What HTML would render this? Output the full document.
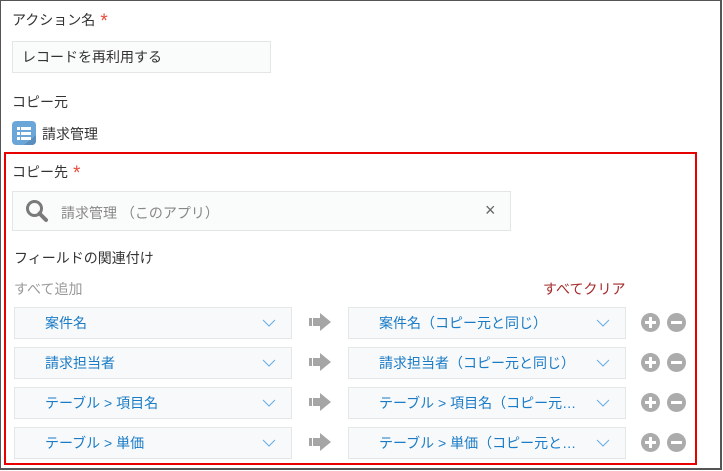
<!DOCTYPE html>
<html><head><meta charset="utf-8"><style>
*{box-sizing:border-box;margin:0;padding:0}
body{width:723px;height:471px;overflow:hidden;background:#fff;font-family:"Liberation Sans","Noto Sans CJK JP",sans-serif;font-size:14px;color:#333;position:relative}
.frame{position:absolute;left:0;top:0;width:722px;height:470px;border:1px solid #555;border-right-width:2px;border-bottom-width:2px}
.a{position:absolute;white-space:nowrap}
.req{color:#e74c3c;margin-left:5px;font-size:19px;line-height:14px;position:relative;top:2px}
.box{position:absolute;background:#fafbfb;border:1px solid #e3e5e6}
.sel{position:absolute;height:32px;background:#f7f9fa;border:1px solid #e3e7e8;color:#1a7bc6;font-size:14px;line-height:30px;white-space:nowrap}
.sel span{position:absolute;left:30px}
.sel svg{position:absolute;top:11px}
.circ{position:absolute;width:19px;height:19px;border-radius:50%;background:#ababab}
.circ:before{content:"";position:absolute;left:4px;top:8px;width:11px;height:3px;background:#fff}
.plus:after{content:"";position:absolute;left:8px;top:4px;width:3px;height:11px;background:#fff}
</style></head><body>
<div class="frame"></div>
<div class="a" style="left:12px;top:10px">アクション名<span class="req">*</span></div>
<div class="box" style="left:12px;top:41px;width:259px;height:32px"></div>
<div class="a" style="left:22px;top:47px">レコードを再利用する</div>
<div class="a" style="left:12px;top:92px">コピー元</div>
<svg class="a" style="left:12px;top:121px" width="24" height="24" viewBox="0 0 24 24"><rect width="24" height="24" rx="4" fill="#6aa7d8"/><path d="M12 24H20a4 4 0 0 0 4-4V14z" fill="#5a8fbd"/><g fill="#fff"><rect x="5" y="6" width="3" height="3"/><rect x="9" y="6" width="10" height="3"/><rect x="5" y="11" width="3" height="3"/><rect x="9" y="11" width="10" height="3"/><rect x="5" y="16" width="3" height="3"/><rect x="9" y="16" width="10" height="3"/></g></svg>
<div class="a" style="left:42px;top:124px">請求管理</div>
<div class="a" style="left:4px;top:152px;width:693px;height:313px;border:2px solid #e60000"></div>
<div class="a" style="left:12px;top:162px">コピー先<span class="req">*</span></div>
<div class="box" style="left:12px;top:191px;width:499px;height:40px"></div>
<svg class="a" style="left:25px;top:199px" width="24" height="24" viewBox="0 0 24 24"><circle cx="9.5" cy="9.5" r="7" fill="none" stroke="#7a7a7a" stroke-width="3"/><path d="M14.5 14.5L21 21" stroke="#7a7a7a" stroke-width="4" stroke-linecap="round"/></svg>
<div class="a" style="left:61px;top:203px;color:#888">請求管理 （このアプリ）</div>
<div class="a" style="left:485px;top:200px;color:#666;font-size:18px">×</div>
<div class="a" style="left:14px;top:248px">フィールドの関連付け</div>
<div class="a" style="left:14px;top:279px;color:#999">すべて追加</div>
<div class="a" style="left:543px;top:279px;color:#a52a2a">すべてクリア</div>

<div class="sel" style="left:14px;top:307px;width:278px"><span>案件名</span><svg style="left:247px" width="14" height="9"><path d="M1 1l6 6 6-6" fill="none" stroke="#6aaee6" stroke-width="1.1"/></svg></div>
<div class="sel" style="left:348px;top:307px;width:278px"><span>案件名（コピー元と同じ）</span><svg style="left:247px" width="14" height="9"><path d="M1 1l6 6 6-6" fill="none" stroke="#6aaee6" stroke-width="1.1"/></svg></div>
<div class="sel" style="left:14px;top:347px;width:278px"><span>請求担当者</span><svg style="left:247px" width="14" height="9"><path d="M1 1l6 6 6-6" fill="none" stroke="#6aaee6" stroke-width="1.1"/></svg></div>
<div class="sel" style="left:348px;top:347px;width:278px"><span>請求担当者（コピー元と同じ）</span><svg style="left:247px" width="14" height="9"><path d="M1 1l6 6 6-6" fill="none" stroke="#6aaee6" stroke-width="1.1"/></svg></div>
<div class="sel" style="left:14px;top:387px;width:278px"><span>テーブル &gt; 項目名</span><svg style="left:247px" width="14" height="9"><path d="M1 1l6 6 6-6" fill="none" stroke="#6aaee6" stroke-width="1.1"/></svg></div>
<div class="sel" style="left:348px;top:387px;width:278px"><span>テーブル &gt; 項目名（コピー元…</span><svg style="left:247px" width="14" height="9"><path d="M1 1l6 6 6-6" fill="none" stroke="#6aaee6" stroke-width="1.1"/></svg></div>
<div class="sel" style="left:14px;top:427px;width:278px"><span>テーブル &gt; 単価</span><svg style="left:247px" width="14" height="9"><path d="M1 1l6 6 6-6" fill="none" stroke="#6aaee6" stroke-width="1.1"/></svg></div>
<div class="sel" style="left:348px;top:427px;width:278px"><span>テーブル &gt; 単価（コピー元と…</span><svg style="left:247px" width="14" height="9"><path d="M1 1l6 6 6-6" fill="none" stroke="#6aaee6" stroke-width="1.1"/></svg></div>

<svg class="a" style="left:308px;top:312px" width="24" height="140" viewBox="0 0 24 140"><g fill="#a5a5a5"><g id="ar"><rect x="1" y="6" width="3" height="8"/><rect x="5" y="6" width="7" height="8"/><path d="M12 1L23 10L12 19z"/></g><use href="#ar" y="40"/><use href="#ar" y="80"/><use href="#ar" y="120"/></g></svg>

<div class="circ plus" style="left:641px;top:313px"></div><div class="circ" style="left:667px;top:313px"></div>
<div class="circ plus" style="left:641px;top:353px"></div><div class="circ" style="left:667px;top:353px"></div>
<div class="circ plus" style="left:641px;top:393px"></div><div class="circ" style="left:667px;top:393px"></div>
<div class="circ plus" style="left:641px;top:433px"></div><div class="circ" style="left:667px;top:433px"></div>
</body></html>
